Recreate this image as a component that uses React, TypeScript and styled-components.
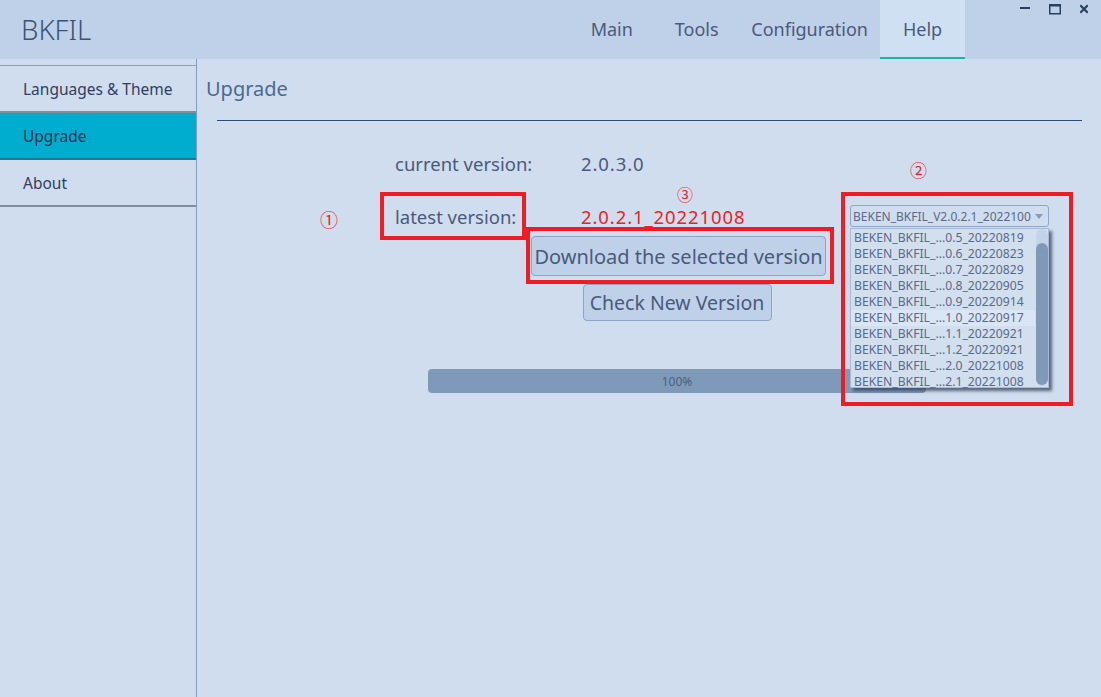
import React from 'react';
import styled, { createGlobalStyle } from 'styled-components';

const GlobalStyle = createGlobalStyle`
  html, body, #root {
    margin: 0;
    padding: 0;
    height: 100%;
  }
  body {
    font-family: "Noto Sans", "Open Sans", sans-serif;
    background-color: #d0ddee;
    overflow: hidden;
  }
`;

const Window = styled.div`
  display: flex;
  flex-direction: column;
  height: 100vh;
  background-color: #d0ddee;
  color: #4a5a7c;
`;

const TitleBar = styled.div`
  display: flex;
  align-items: center;
  height: 59px;
  flex-shrink: 0;
  background-color: #bfd1e8;
`;

const Brand = styled.div`
  padding-left: 21px;
  font-size: 27.5px;
  font-weight: 300;
  color: #3d5476;
`;

const Tabs = styled.nav`
  display: flex;
  align-self: stretch;
  margin-left: auto;
`;

const Tab = styled.div<{ active?: boolean }>`
  display: flex;
  align-items: center;
  justify-content: center;
  min-width: 85px;
  padding: 0 12px;
  box-sizing: border-box;
  font-size: 18px;
  color: #4a5a7c;
  background-color: ${props => (props.active ? '#cfe0f3' : 'transparent')};
  border-bottom: 2px solid ${props => (props.active ? '#14b8a0' : 'transparent')};
`;

const WindowControls = styled.div`
  display: flex;
  justify-content: flex-end;
  align-self: flex-start;
  gap: 19px;
  width: 136px;
  box-sizing: border-box;
  padding: 4px 13px 0 0;
`;

const Body = styled.div`
  display: flex;
  flex: 1;
  min-height: 0;
`;

const Sidebar = styled.aside`
  width: 196px;
  flex-shrink: 0;
  border-right: 1px solid #7f9cc5;
  padding-top: 6px;
`;

const SideList = styled.div`
  border-top: 1px solid #8ba0bd;
`;

const SideItem = styled.div<{ active?: boolean }>`
  display: flex;
  align-items: center;
  height: 47px;
  padding: 0 0 0 23px;
  box-sizing: border-box;
  font-size: 15.5px;
  color: ${props => (props.active ? '#1d3550' : '#2f4060')};
  background-color: ${props => (props.active ? '#00adcf' : 'transparent')};
  border-bottom: 2px solid ${props => (props.active ? '#1b7b96' : '#7f8fa0')};
`;

const Content = styled.main`
  flex: 1;
  position: relative;
`;

const Heading = styled.h2`
  margin: 0;
  padding: 16px 0 0 9px;
  line-height: 28px;
  font-size: 20px;
  font-weight: 400;
  color: #4b6a90;
`;

const Divider = styled.hr`
  margin: 17px 19px 0 20px;
  border: none;
  height: 1px;
  background-color: #2f4a6e;
`;

const VersionGrid = styled.div`
  display: grid;
  grid-template-columns: 146px 324px 199px;
  grid-auto-rows: 48px;
  row-gap: 5px;
  margin: 18px 0 0 183px;
`;

const LabelBox = styled.div<{ marked?: boolean }>`
  display: flex;
  align-items: center;
  box-sizing: border-box;
  padding-left: 11px;
  border: 4px solid ${props => (props.marked ? '#ee1c25' : 'transparent')};
  font-size: 18.5px;
  color: #4a5a7c;
  white-space: nowrap;
  position: relative;
`;

const Value = styled.div<{ highlight?: boolean }>`
  display: flex;
  align-items: center;
  padding-left: 55px;
  font-size: 18.5px;
  letter-spacing: 0.9px;
  color: ${props => (props.highlight ? '#ee2222' : '#4a5a7c')};
  position: relative;
`;

const Mark = styled.span<{ size?: number }>`
  position: absolute;
  font-family: "Noto Sans CJK SC", "Noto Sans", sans-serif;
  font-size: ${props => props.size || 17}px;
  letter-spacing: 0;
  line-height: 1;
  color: #ee1c25;
`;

const DropCell = styled.div`
  align-self: center;
  position: relative;
  z-index: 2;
`;

const Combo = styled.div`
  display: flex;
  align-items: center;
  justify-content: space-between;
  box-sizing: border-box;
  height: 22px;
  padding: 0 5px 0 2px;
  border: 1px solid #8fa6c8;
  border-radius: 3px;
  font-size: 12px;
  color: #5a6a88;
  white-space: nowrap;
`;

const Caret = styled.span`
  width: 0;
  height: 0;
  border-left: 4px solid transparent;
  border-right: 4px solid transparent;
  border-top: 5px solid #8a9ab4;
`;

const Popup = styled.div`
  position: absolute;
  top: 23px;
  left: 0;
  width: 199px;
  height: 160px;
  box-sizing: border-box;
  padding-top: 1px;
  background-color: #d2dfef;
  border: 1px solid #a9bbd2;
  box-shadow: 3px 3px 3px rgba(50, 66, 92, 0.75);
`;

const Option = styled.div<{ hover?: boolean }>`
  height: 16px;
  line-height: 16px;
  margin-right: 13px;
  padding-left: 3px;
  font-size: 12.2px;
  color: #5a6a88;
  white-space: nowrap;
  background-color: ${props => (props.hover ? '#dae6f5' : 'transparent')};
`;

const ScrollTrack = styled.div`
  position: absolute;
  top: 0;
  right: 0;
  bottom: 1px;
  width: 12px;
  border-radius: 6px;
  background-color: #c3d3e8;
`;

const ScrollThumb = styled.div`
  position: absolute;
  top: 14px;
  left: 0;
  right: 0;
  bottom: 1px;
  border-radius: 6px;
  background-color: #7f9ab8;
`;

const AnnotFrame = styled.div`
  position: absolute;
  left: -9px;
  top: -13px;
  width: 232px;
  height: 214px;
  box-sizing: border-box;
  border: 4px solid #ee1c25;
  pointer-events: none;
`;

const Actions = styled.div`
  display: flex;
  flex-direction: column;
  align-items: center;
  width: 498px;
  margin: -13px 0 0 231px;
`;

const MarkBox = styled.div`
  padding: 5px 4px 4px 1px;
  border: 4px solid #ee1c25;
  margin-left: 6px;
  position: relative;
  z-index: 1;
`;

const Button = styled.button<{ wide?: boolean }>`
  box-sizing: border-box;
  height: ${props => (props.wide ? 40 : 37)}px;
  width: ${props => (props.wide ? '295px' : '189px')};
  padding: 0;
  border: 1px solid #8ea5c6;
  border-radius: 4px;
  background-color: #bfd1e8;
  font-family: "Noto Sans", sans-serif;
  font-size: ${props => (props.wide ? 20 : 19.5)}px;
  color: #4a5a7c;
  white-space: nowrap;
`;

const Progress = styled.div`
  display: flex;
  align-items: center;
  justify-content: center;
  width: 100%;
  height: 24px;
  margin-top: 48px;
  border-radius: 4px;
  background-color: #7f9ab8;
  font-size: 12px;
  color: #4a5f80;
`;

const versions = [
  '0.5_20220819',
  '0.6_20220823',
  '0.7_20220829',
  '0.8_20220905',
  '0.9_20220914',
  '1.0_20220917',
  '1.1_20220921',
  '1.2_20220921',
  '2.0_20221008',
  '2.1_20221008',
];

const App: React.FC = () => {
  return (
    <>
      <GlobalStyle />
      <Window>
        <TitleBar>
          <Brand>BKFIL</Brand>
          <Tabs>
            <Tab>Main</Tab>
            <Tab>Tools</Tab>
            <Tab>Configuration</Tab>
            <Tab active>Help</Tab>
          </Tabs>
          <WindowControls>
            <svg width="10" height="12" viewBox="0 0 10 12">
              <rect x="0" y="3" width="10" height="2" fill="#2b3f5e" />
            </svg>
            <svg width="12" height="12" viewBox="0 0 12 12">
              <rect x="0.75" y="1" width="10.5" height="8.75" fill="none" stroke="#2b3f5e" strokeWidth="1.5" />
              <rect x="0" y="0" width="12" height="2.5" fill="#2b3f5e" />
            </svg>
            <svg width="8" height="12" viewBox="0 0 8 12">
              <path d="M1 2 L7 8 M7 2 L1 8" stroke="#2b3f5e" strokeWidth="2.2" strokeLinecap="square" />
            </svg>
          </WindowControls>
        </TitleBar>
        <Body>
          <Sidebar>
            <SideList>
              <SideItem>Languages &amp; Theme</SideItem>
              <SideItem active>Upgrade</SideItem>
              <SideItem>About</SideItem>
            </SideList>
          </Sidebar>
          <Content>
            <Heading>Upgrade</Heading>
            <Divider />
            <VersionGrid>
              <LabelBox>current version:</LabelBox>
              <Value>2.0.3.0</Value>
              <div />
              <LabelBox marked>
                latest version:
                <Mark size={18} style={{ left: -64, top: 14 }}>①</Mark>
              </LabelBox>
              <Value highlight>
                2.0.2.1_20221008
                <Mark size={16} style={{ left: 151, top: -6 }}>③</Mark>
              </Value>
              <DropCell>
                <Combo>
                  BEKEN_BKFIL_V2.0.2.1_2022100
                  <Caret />
                </Combo>
                <Popup>
                  {versions.map((v, i) => (
                    <Option key={v} hover={i === 5}>
                      BEKEN_BKFIL_...{v}
                    </Option>
                  ))}
                  <ScrollTrack>
                    <ScrollThumb />
                  </ScrollTrack>
                </Popup>
                <AnnotFrame />
                <Mark size={17} style={{ left: 60, top: -44 }}>②</Mark>
              </DropCell>
            </VersionGrid>
            <Actions>
              <MarkBox>
                <Button wide>Download the selected version</Button>
              </MarkBox>
              <Button>Check New Version</Button>
              <Progress>100%</Progress>
            </Actions>
          </Content>
        </Body>
      </Window>
    </>
  );
};

export default App;
